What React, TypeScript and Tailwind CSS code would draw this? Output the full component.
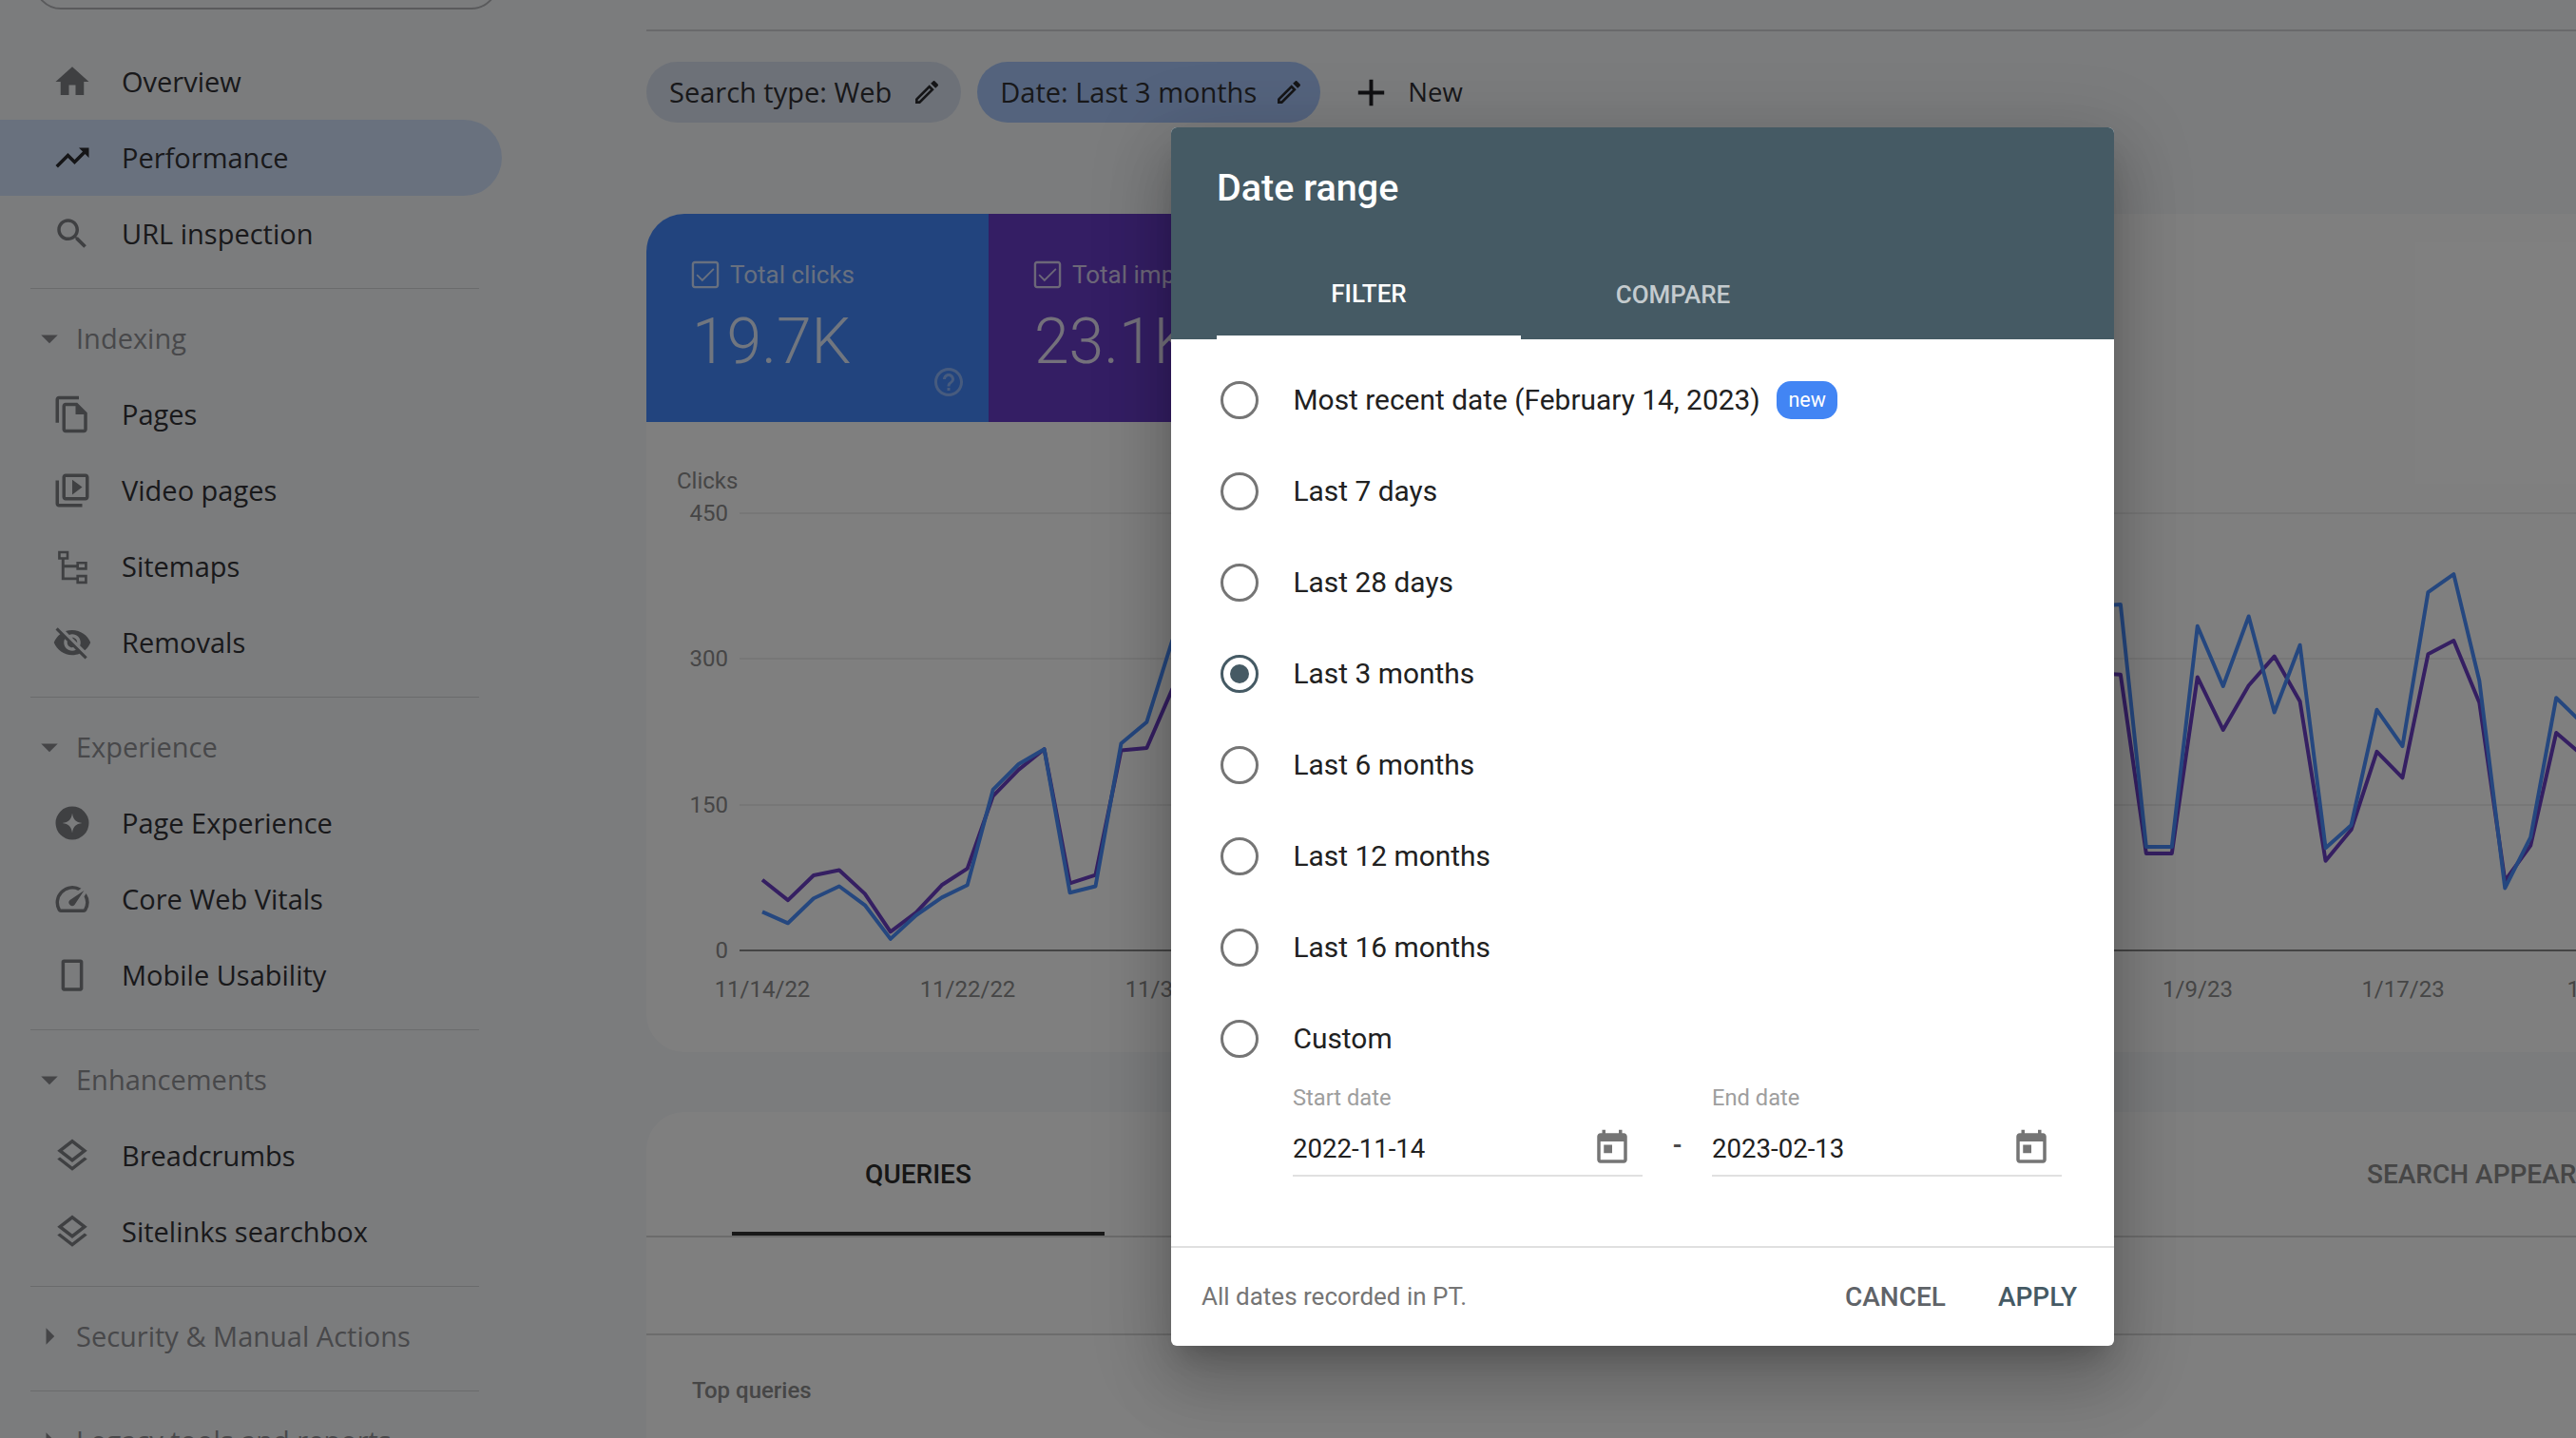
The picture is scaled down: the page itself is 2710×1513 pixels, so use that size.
import React from 'react'

const ICONS: Record<string, string> = {
  home: 'M10 20v-6h4v6h5v-8h3L12 3 2 12h3v8z',
  trend: 'M16 6l2.29 2.29-4.88 4.88-4-4L2 16.59 3.41 18l6-6 4 4 6.3-6.29L22 12V6z',
  search:
    'M15.5 14h-.79l-.28-.27C15.41 12.59 16 11.11 16 9.5 16 5.91 13.09 3 9.5 3S3 5.91 3 9.5 5.91 16 9.5 16c1.61 0 3.09-.59 4.23-1.57l.27.28v.79l5 4.99L20.49 19l-4.99-5zm-6 0C7.01 14 5 11.99 5 9.5S7.01 5 9.5 5 14 7.01 14 9.5 11.99 14 9.5 14z',
  pages:
    'M16 1H4c-1.1 0-2 .9-2 2v14h2V3h12V1zm-1 4H8c-1.1 0-1.99.9-1.99 2L6 21c0 1.1.89 2 1.99 2H19c1.1 0 2-.9 2-2V11l-6-6zM8 21V7h6v5h5v9H8z',
  video:
    'M4 6H2v14c0 1.1.9 2 2 2h14v-2H4V6zm16-4H8c-1.1 0-2 .9-2 2v12c0 1.1.9 2 2 2h12c1.1 0 2-.9 2-2V4c0-1.1-.9-2-2-2zm0 14H8V4h12v12zM12 5.5v9l6-4.5z',
  sitemap:
    'M3.500 2.700h6.400v5.200H7.300v3.100h7.200V9.100H21v5h-6.500v-1.400H7.300v5.800h7.200V17H21v5.400h-6.500v-2.200H5.600V7.900H3.500zM5 4.200v2.200h3.400V4.200zM16 10.600v2h3.500v-2zM16 18.500v2.400h3.500v-2.400z',
  removals:
    'M12 7c2.76 0 5 2.24 5 5 0 .65-.13 1.26-.36 1.83l2.92 2.92c1.51-1.26 2.7-2.89 3.43-4.75-1.73-4.39-6-7.5-11-7.5-1.4 0-2.74.25-3.98.7l2.16 2.16C10.74 7.13 11.35 7 12 7zM2 4.27l2.28 2.28.46.46C3.08 8.3 1.78 10.02 1 12c1.73 4.39 6 7.5 11 7.5 1.55 0 3.03-.3 4.38-.84l.42.42L19.73 22 21 20.73 3.27 3 2 4.27zM7.53 9.8l1.55 1.55c-.05.21-.08.43-.08.65 0 1.66 1.34 3 3 3 .22 0 .44-.03.65-.08l1.55 1.55c-.67.33-1.41.53-2.2.53-2.76 0-5-2.24-5-5 0-.79.2-1.53.53-2.2zm4.31-.78l3.15 3.15.02-.16c0-1.66-1.34-3-3-3l-.17.01z',
  star: 'M12 2a10 10 0 1 0 0 20 10 10 0 0 0 0-20zM12 6c.6 4 2 5.400 6 6-4 .6-5.400 2-6 6-.6-4-2-5.400-6-6 4-.6 5.400-2 6-6z',
  vitals:
    'M20.38 8.57l-1.23 1.85a8 8 0 0 1-.22 7.58H5.07A8 8 0 0 1 15.58 6.85l1.85-1.23A10 10 0 0 0 3.35 19a2 2 0 0 0 1.72 1h13.85a2 2 0 0 0 1.74-1 10 10 0 0 0-.27-10.44zm-9.79 6.84a2 2 0 0 0 2.83 0l5.66-8.49-8.49 5.66a2 2 0 0 0 0 2.83z',
  mobile: 'M7 2.500h10c.8 0 1.500.7 1.500 1.500v16c0 .8-.7 1.500-1.500 1.500H7c-.8 0-1.500-.7-1.500-1.500V4c0-.8.7-1.500 1.500-1.500zM7.500 4.500v15h9v-15z',
  layers:
    'M11.99 18.54l-7.37-5.73L3 14.07l9 7 9-7-1.63-1.27-7.38 5.74zM12 16l7.36-5.73L21 9l-9-7-9 7 1.63 1.27L12 16zm0-11.47L17.74 9 12 13.47 6.26 9 12 4.53z',
  caretDown: 'M7 10l5 5 5-5z',
  caretRight: 'M10 17l5-5-5-5v10z',
  pencil:
    'M14.06 9.02l.92.92L5.92 19H5v-.92l9.06-9.06M17.66 3c-.25 0-.51.1-.7.29l-1.83 1.83 3.75 3.75 1.83-1.83c.39-.39.39-1.02 0-1.41l-2.34-2.34c-.2-.2-.45-.29-.71-.29zm-3.6 3.19L3 17.25V21h3.75L17.81 9.94l-3.75-3.75z',
  plus: 'M19 13h-6v6h-2v-6H5v-2h6V5h2v6h6v2z',
  check:
    'M19 3H5c-1.1 0-2 .9-2 2v14c0 1.1.9 2 2 2h14c1.1 0 2-.9 2-2V5c0-1.1-.9-2-2-2zm0 16.500H5c-.3 0-.5-.2-.5-.5V5c0-.3.2-.5.5-.5h14c.3 0 .5.2.5.5v14c0 .3-.2.5-.5.5zM10 16.500l-4-4 .8-.8 3.200 3.200 7.200-7.200.8.8z',
  help: 'M11 18h2v-2h-2v2zm1-16C6.48 2 2 6.48 2 12s4.48 10 10 10 10-4.48 10-10S17.52 2 12 2zm0 18c-4.41 0-8-3.59-8-8s3.59-8 8-8 8 3.59 8 8-3.59 8-8 8zm0-14c-2.21 0-4 1.790-4 4h2c0-1.1.9-2 2-2s2 .9 2 2c0 2-3 1.750-3 5h2c0-2.250 3-2.500 3-5 0-2.210-1.790-4-4-4z',
  today:
    'M19 3h-1V1h-2v2H8V1H6v2H5c-1.110 0-1.990.9-1.990 2L3 19c0 1.100.89 2 2 2h14c1.100 0 2-.9 2-2V5c0-1.100-.9-2-2-2zm0 16H5V8h14v11zM7 10h5v5H7z',
}

function Icon({ name, className }: { name: string; className: string }) {
  return (
    <svg viewBox="0 0 24 24" fill="currentColor" fillRule="evenodd" className={className}>
      <path d={ICONS[name]} />
    </svg>
  )
}

interface NavItem {
  icon: string
  label: string
  active?: boolean
}

interface NavGroup {
  title?: string
  open?: boolean
  items: NavItem[]
}

const navGroups: NavGroup[] = [
  {
    items: [
      { icon: 'home', label: 'Overview' },
      { icon: 'trend', label: 'Performance', active: true },
      { icon: 'search', label: 'URL inspection' },
    ],
  },
  {
    title: 'Indexing',
    open: true,
    items: [
      { icon: 'pages', label: 'Pages' },
      { icon: 'video', label: 'Video pages' },
      { icon: 'sitemap', label: 'Sitemaps' },
      { icon: 'removals', label: 'Removals' },
    ],
  },
  {
    title: 'Experience',
    open: true,
    items: [
      { icon: 'star', label: 'Page Experience' },
      { icon: 'vitals', label: 'Core Web Vitals' },
      { icon: 'mobile', label: 'Mobile Usability' },
    ],
  },
  {
    title: 'Enhancements',
    open: true,
    items: [
      { icon: 'layers', label: 'Breadcrumbs' },
      { icon: 'layers', label: 'Sitelinks searchbox' },
    ],
  },
  { title: 'Security & Manual Actions', items: [] },
  { title: 'Legacy tools and reports', items: [] },
]

function Sidebar() {
  return (
    <aside className="w-[680px] shrink-0 font-['Open_Sans',sans-serif] text-[29px]">
      <div className="ml-[36px] mt-[-50px] mb-[36px] h-[60px] w-[488px] rounded-[28px] border-2 border-[#b4b5b8]" />
      {navGroups.map((group, g) => (
        <div key={g}>
          {g > 0 && <div className="ml-[32px] mt-[17px] mb-[12px] h-px w-[472px] bg-[#d5d6d8]" />}
          {group.title && (
            <div className="flex h-[80px] items-center gap-[7px] pl-[31px] text-[#909195]">
              <Icon name={group.open ? 'caretDown' : 'caretRight'} className="h-[42px] w-[42px] text-[#8a8b8f]" />
              <span className="whitespace-nowrap">{group.title}</span>
            </div>
          )}
          {group.items.map((item) => (
            <div
              key={item.label}
              className={`flex h-[80px] w-[528px] items-center gap-[31px] rounded-r-full pl-[55px] text-[#323236] ${
                item.active ? 'bg-[#d2e3fc]' : ''
              }`}
            >
              <Icon
                name={item.icon}
                className={`h-[42px] w-[42px] ${item.active ? 'text-[#2a2a2e]' : 'text-[#7e8084]'}`}
              />
              <span>{item.label}</span>
            </div>
          ))}
        </div>
      ))}
    </aside>
  )
}

const STEP = 26.96
const X0 = 802

const leftBlue = [959.4, 971.3, 945.2, 932.5, 952.3, 987.9, 963, 944.4, 931.3, 830.9, 804, 788.2, 939.2, 932.5, 782.3, 759.7, 673.5]
const leftPurple = [925.8, 947.1, 921, 915.5, 940.4, 980.4, 960.2, 931.3, 913.9, 837.6, 809.9, 788.2, 929.4, 920.7, 789.4, 787, 724.9]
const rightBlue = [637.8, 635.9, 891.1, 891.1, 658.8, 722, 648.5, 749.5, 678.7, 892.3, 868.2, 746.8, 785.1, 623.2, 604.1, 716.2, 934.4, 880.8, 734.2, 760.6]
const rightPurple = [708.2, 709.7, 898, 898, 712.4, 767.9, 721.2, 690.6, 738, 905.7, 873.1, 790.9, 818.4, 688.3, 674.1, 739.2, 926.7, 889.6, 771, 794.3]

function toLine(left: number[], right: number[]) {
  const a = left.map((y, i) => `${X0 + i * STEP},${y}`)
  const b = right.map((y, i) => `${X0 + (i + 52) * STEP},${y}`)
  return [...a, ...b].join(' ')
}

function Chart() {
  const ticks = [
    { label: '450', y: 540 },
    { label: '300', y: 693 },
    { label: '150', y: 847 },
    { label: '0', y: 1000 },
  ]
  const dates = [
    { label: '11/14/22', x: 802 },
    { label: '11/22/22', x: 1018 },
    { label: '11/30/22', x: 1234 },
    { label: '1/9/23', x: 2312 },
    { label: '1/17/23', x: 2528 },
    { label: '1/25/23', x: 2744 },
  ]
  return (
    <svg viewBox="680 444 2030 663" className="block h-[663px] w-[2030px] font-['Roboto',sans-serif] text-[24px]">
      <text x={712} y={514} fill="#8c8c8c">Clicks</text>
      {ticks.map((t) => (
        <g key={t.label}>
          <text x={766} y={t.y + 8} textAnchor="end" fill="#8c8c8c">{t.label}</text>
          <line x1={778} x2={2710} y1={t.y} y2={t.y} stroke={t.y === 1000 ? '#8a8a8a' : '#e8e8e8'} strokeWidth={t.y === 1000 ? 2 : 1.500} />
        </g>
      ))}
      {dates.map((d) => (
        <text key={d.label} x={d.x} y={1049} textAnchor="middle" fill="#8c8c8c">{d.label}</text>
      ))}
      <polyline points={toLine(leftPurple, rightPurple)} fill="none" stroke="#6a3ec4" strokeWidth={4} strokeLinejoin="round" />
      <polyline points={toLine(leftBlue, rightBlue)} fill="none" stroke="#4a8fff" strokeWidth={4} strokeLinejoin="round" />
    </svg>
  )
}

function Metric({ label, value, className, help }: { label: string; value: string; className: string; help?: boolean }) {
  return (
    <div className={`relative w-[360px] shrink-0 pl-[48px] pt-[48px] font-['Roboto',sans-serif] ${className}`}>
      <div className="flex h-[32px] items-center gap-[7px] text-[26px] text-white/75">
        <Icon name="check" className="ml-[-5px] h-[38px] w-[38px] shrink-0" />
        <span className="whitespace-nowrap">{label}</span>
      </div>
      <div className="mt-[18px] text-[66px] font-light leading-[74px] text-white/85">{value}</div>
      {help && <Icon name="help" className="absolute right-[24px] bottom-[24px] h-[36px] w-[36px] text-white/40" />}
    </div>
  )
}

function Chip({ label, className }: { label: string; className: string }) {
  return (
    <div className={`flex h-[64px] items-center rounded-full pl-[24px] ${className}`}>
      <span className="whitespace-nowrap">{label}</span>
      <Icon name="pencil" className="h-[32px] w-[32px] text-[#2a2a2e]" />
    </div>
  )
}

function Main() {
  return (
    <main className="flex min-w-0 flex-1 flex-col">
      <div className="h-[33px] shrink-0 border-b-2 border-[#d2d3d6]" />
      <div className="mt-[32px] flex items-center gap-[17px] font-['Open_Sans',sans-serif] text-[29px] text-[#303034]">
        <Chip label="Search type: Web" className="gap-[21px] bg-[#dbe3f0] pr-[20px]" />
        <Chip label="Date: Last 3 months" className="gap-[18px] bg-[#a8c7fa] pr-[17px]" />
        <div className="flex items-center gap-[15px] pl-[13px]">
          <Icon name="plus" className="h-[47px] w-[47px] text-[#202024]" />
          <span className="text-[27.5px]">New</span>
        </div>
      </div>
      <section className="mt-[96px] shrink-0 overflow-hidden rounded-l-[40px] bg-white">
        <div className="flex h-[219px]">
          <Metric label="Total clicks" value="19.7K" help className="bg-[#4488fc]" />
          <Metric label="Total impressions" value="23.1K" className="bg-[#683cc8]" />
        </div>
        <Chart />
      </section>
      <section className="mt-[63px] flex-1 rounded-tl-[40px] bg-white font-['Roboto',sans-serif] text-[28px] font-medium text-[#8c8c8c]">
        <div className="flex h-[132px] items-stretch border-b-2 border-[#d8d8d8] pl-[90px]">
          <div className="flex w-[392px] shrink-0 items-center justify-center border-b-4 border-[#333] pt-[6px] text-[#2c2c2c]">QUERIES</div>
          <div className="flex w-[340px] shrink-0 items-center justify-center">PAGES</div>
          <div className="flex w-[400px] shrink-0 items-center justify-center">COUNTRIES</div>
          <div className="flex w-[588px] shrink-0 items-center">DEVICES</div>
          <div className="flex items-center whitespace-nowrap pt-[2px]">SEARCH APPEARANCE</div>
        </div>
        <div className="h-[103px] border-b-2 border-[#d8d8d8]" />
        <div className="pl-[48px] pt-[40px] text-[24px]">Top queries</div>
      </section>
    </main>
  )
}

const ranges = ['Last 7 days', 'Last 28 days', 'Last 3 months', 'Last 6 months', 'Last 12 months', 'Last 16 months', 'Custom']

function Radio({ checked }: { checked?: boolean }) {
  return (
    <span
      className={`flex h-[40px] w-[40px] shrink-0 items-center justify-center rounded-full border-[3.5px] ${
        checked ? 'border-[#455a64]' : 'border-[#757575]'
      }`}
    >
      {checked && <span className="h-[20px] w-[20px] rounded-full bg-[#455a64]" />}
    </span>
  )
}

function DateField({ label, value }: { label: string; value: string }) {
  return (
    <div className="w-[368px]">
      <div className="h-[28px] text-[23.7px] leading-[28px] text-[#9e9e9e]">{label}</div>
      <div className="flex h-[69px] items-center justify-between border-b-2 border-[#e0e0e0] pr-[11px] pt-[10px]">
        <span className="pt-[2px] text-[27.6px] text-[#212121]">{value}</span>
        <Icon name="today" className="h-[42px] w-[42px] text-[#757575]" />
      </div>
    </div>
  )
}

function DateDialog() {
  return (
    <div className="absolute left-[1232px] top-[134px] flex h-[1282px] w-[992px] flex-col overflow-hidden rounded-[6px] bg-white font-['Roboto',sans-serif] shadow-[0_19px_26px_-12px_rgba(0,0,0,0.2),0_41px_66px_5px_rgba(0,0,0,0.14),0_16px_80px_14px_rgba(0,0,0,0.12)]">
      <div className="flex h-[223px] shrink-0 flex-col justify-between bg-[#455a64] pl-[48px] text-white">
        <div className="pt-[44px] text-[39.500px] font-medium leading-[40px]">Date range</div>
        <div className="flex text-[26px] font-medium">
          <div className="flex h-[96px] w-[320px] items-center justify-center border-b-4 border-white pt-[4px]">FILTER</div>
          <div className="flex h-[96px] w-[320px] items-center justify-center pt-[2px] text-white/70">COMPARE</div>
        </div>
      </div>
      <div className="flex-1 pl-[52px] pt-[16px] text-[29.9px] text-[#212121]">
        <label className="flex h-[96px] items-center gap-[36.5px]">
          <Radio />
          <span>Most recent date (February 14, 2023)</span>
          <span className="ml-[-19px] flex h-[40px] w-[64px] items-center justify-center rounded-[15px] bg-[#4285f4] text-[21.5px] text-white">new</span>
        </label>
        {ranges.map((r) => (
          <label key={r} className="flex h-[96px] items-center gap-[36.5px]">
            <Radio checked={r === 'Last 3 months'} />
            <span>{r}</span>
          </label>
        ))}
        <div className="flex pl-[76px]">
          <DateField label="Start date" value="2022-11-14" />
          <div className="flex w-[73px] items-center justify-center pt-[32px] text-[26px] font-bold text-[#4a4a4a]">-</div>
          <DateField label="End date" value="2023-02-13" />
        </div>
      </div>
      <div className="flex h-[105px] shrink-0 items-center justify-between border-t-2 border-[#e0e0e0] pl-[32px] pr-[39px]">
        <span className="text-[26px] text-[#757575]">All dates recorded in PT.</span>
        <div className="flex gap-[55px] text-[28px] font-medium">
          <span className="text-[#5f6368]">CANCEL</span>
          <span className="text-[#455a64]">APPLY</span>
        </div>
      </div>
    </div>
  )
}

export default function App() {
  return (
    <div className="relative flex h-[1513px] w-[2710px] overflow-hidden bg-[#f6f8fb]">
      <Sidebar />
      <Main />
      <div className="absolute inset-0 bg-black/50" />
      <DateDialog />
    </div>
  )
}
